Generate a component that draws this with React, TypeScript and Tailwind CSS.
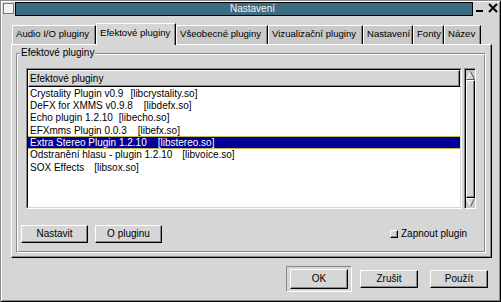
import React from "react";

const tabs = [
  { label: "Audio I/O pluginy", w: "w-[84px]" },
  { label: "Efektové pluginy", w: "w-[80px]", active: true },
  { label: "Všeobecné pluginy", w: "w-[92px]" },
  { label: "Vizualizační pluginy", w: "w-[95px]" },
  { label: "Nastavení", w: "w-[50px]" },
  { label: "Fonty", w: "w-[31px]" },
  { label: "Název", w: "w-[37px]" },
];

const plugins = [
  { name: "Crystality Plugin v0.9", lib: "[libcrystality.so]", gap: "ml-[7px]" },
  { name: "DeFX for XMMS v0.9.8", lib: "[libdefx.so]", gap: "ml-[11px]" },
  { name: "Echo plugin 1.2.10", lib: "[libecho.so]", gap: "ml-[6px]" },
  { name: "EFXmms Plugin 0.0.3", lib: "[libefx.so]", gap: "ml-[11px]" },
  { name: "Extra Stereo Plugin 1.2.10", lib: "[libstereo.so]", gap: "ml-[11px]", selected: true },
  { name: "Odstranění hlasu - plugin 1.2.10", lib: "[libvoice.so]", gap: "ml-[10px]" },
  { name: "SOX Effects", lib: "[libsox.so]", gap: "ml-[10px]" },
];

const raised =
  "border-t border-l border-white border-r border-b border-r-black border-b-black shadow-[inset_-1px_-1px_0_#8a8a8a]";

const Button = ({ label, className = "" }: { label: string; className?: string }) => (
  <div className={`flex items-center justify-center bg-[#d6d6d6] text-black ${raised} ${className}`}>
    {label}
  </div>
);

const Arrow = ({ up }: { up?: boolean }) => (
  <svg width="9" height="9" viewBox="0 0 9 9" className="shrink-0">
    {up ? (
      <>
        <polygon points="4.5,0.5 8.5,8.5 0.5,8.5" fill="#d6d6d6" />
        <polyline points="0.5,8.5 4.5,0.5" stroke="#fff" fill="none" />
        <polyline points="4.5,0.5 8.5,8.5 0.5,8.5" stroke="#555" fill="none" />
      </>
    ) : (
      <>
        <polygon points="0.5,0.5 8.5,0.5 4.5,8.5" fill="#d6d6d6" />
        <polyline points="4.5,8.5 0.5,0.5 8.5,0.5" stroke="#fff" fill="none" />
        <polyline points="8.5,0.5 4.5,8.5" stroke="#555" fill="none" />
      </>
    )}
  </svg>
);

export default function App() {
  return (
    <div className="w-[501px] h-[302px] overflow-hidden bg-[#d6d6d6] font-['Liberation_Sans',Arial,sans-serif] text-[10px] leading-[12px] text-black shadow-[inset_1px_1px_0_#8a8a8a,inset_-1px_-1px_0_#000,inset_2px_2px_0_#fff,inset_-2px_-2px_0_#8a8a8a]">
      {/* title bar */}
      <div className="flex items-start h-[17px]">
        <div className="ml-[3px] mt-[3px] w-[11px] h-[11px] border border-[#7a7a7a] bg-[#f2f2f2]" />
        <div className="ml-[1px] mt-[2px] w-[458px] h-[14px] border border-black bg-[#3c6b82] text-[#f4f4f4] pl-[214px] leading-[12px]">
          Nastavení
        </div>
        <svg width="28" height="17" viewBox="0 0 28 17" className="shrink-0">
          <rect x="3" y="10" width="7" height="2" fill="#000" />
          <path d="M16 4 L24 12 M24 4 L16 12" stroke="#000" strokeWidth="2" />
        </svg>
      </div>

      {/* tabs */}
      <div className="flex items-end h-[21px] mt-[6px] ml-[12px] text-[9.6px]">
        {tabs.map((t) =>
          t.active ? (
            <div
              key={t.label}
              className={`${t.w} h-[22px] -mb-px relative z-10 bg-[#d6d6d6] border-t border-l border-white border-r border-r-black shadow-[inset_-1px_0_0_#8a8a8a] pl-[3px] pb-[3px] flex items-center whitespace-nowrap`}
            >
              {t.label}
            </div>
          ) : (
            <div
              key={t.label}
              className={`${t.w} h-[19px] bg-[#c9c9c9] border-t border-l border-white border-r border-r-black shadow-[inset_-1px_0_0_#8a8a8a] pl-[3px] pb-[2px] flex items-center whitespace-nowrap`}
            >
              {t.label}
            </div>
          )
        )}
      </div>

      {/* notebook panel */}
      <div className="ml-[11px] w-[481px] h-[214px] border-t border-l border-white border-r border-b border-r-black border-b-black shadow-[inset_-1px_-1px_0_#8a8a8a] pt-[8px] pl-[4px]">
        <div className="relative w-[470px] h-[200px] border-t border-l border-[#8a8a8a] border-r border-b border-r-white border-b-white">
          <div className="h-full border-t border-l border-white border-r border-b border-r-[#8a8a8a] border-b-[#8a8a8a]">
            <div className="flex mt-[13px] ml-[8px]">
              {/* list */}
              <div className="w-[436px] h-[141px] border-t border-l border-[#8a8a8a] border-r border-b border-r-white border-b-white">
                <div className="h-full flex flex-col border-t border-l border-black border-r border-b border-r-[#d6d6d6] border-b-[#d6d6d6] bg-white">
                  <div className={`h-[17px] shrink-0 bg-[#d6d6d6] pl-[1px] flex items-center ${raised}`}>
                    Efektové pluginy
                  </div>
                  <div className="flex-1 bg-white">
                    {plugins.map((p) => (
                      <div
                        key={p.name}
                        className={`h-[12.33px] leading-[11px] pl-[2px] flex items-center whitespace-nowrap ${
                          p.selected ? "bg-[#000098] text-white border-y border-[#c8b850]" : ""
                        }`}
                      >
                        <span>{p.name}</span>
                        <span className={p.gap}>{p.lib}</span>
                      </div>
                    ))}
                  </div>
                </div>
              </div>
              {/* scrollbar */}
              <div className="ml-[2px] w-[12px] h-[141px] border-t border-l border-[#8a8a8a] border-r border-b border-r-white border-b-white bg-[#c9c9c9]">
                <div className="h-full flex flex-col items-center border-t border-l border-black pt-[1px] pb-[1px]">
                  <Arrow up />
                  <div className={`w-[9px] flex-1 bg-[#d6d6d6] ${raised}`} />
                  <Arrow />
                </div>
              </div>
            </div>

            <div className="flex items-center mt-[16px] ml-[3px]">
              <Button label="Nastavit" className="w-[67px] h-[18px]" />
              <Button label="O pluginu" className="ml-[7px] w-[67px] h-[18px]" />
              <div className={`ml-[228px] w-[8px] h-[8px] bg-[#d6d6d6] ${raised}`} />
              <span className="ml-[3px]">Zapnout plugin</span>
            </div>
          </div>
          <div className="absolute left-[3px] top-[-7px] px-[1px] bg-[#d6d6d6] leading-[12px]">
            Efektové pluginy
          </div>
        </div>
      </div>

      {/* dialog buttons */}
      <div className="flex items-center mt-[8px] ml-[286px]">
        <div className="w-[66px] h-[26px] flex items-center justify-center border-t border-l border-[#8a8a8a] border-r border-b border-r-white border-b-white">
          <Button label="OK" className="w-[58px] h-[20px]" />
        </div>
        <Button label="Zrušit" className="ml-[8px] w-[58px] h-[18px]" />
        <Button label="Použít" className="ml-[12px] w-[58px] h-[18px]" />
      </div>
    </div>
  );
}
